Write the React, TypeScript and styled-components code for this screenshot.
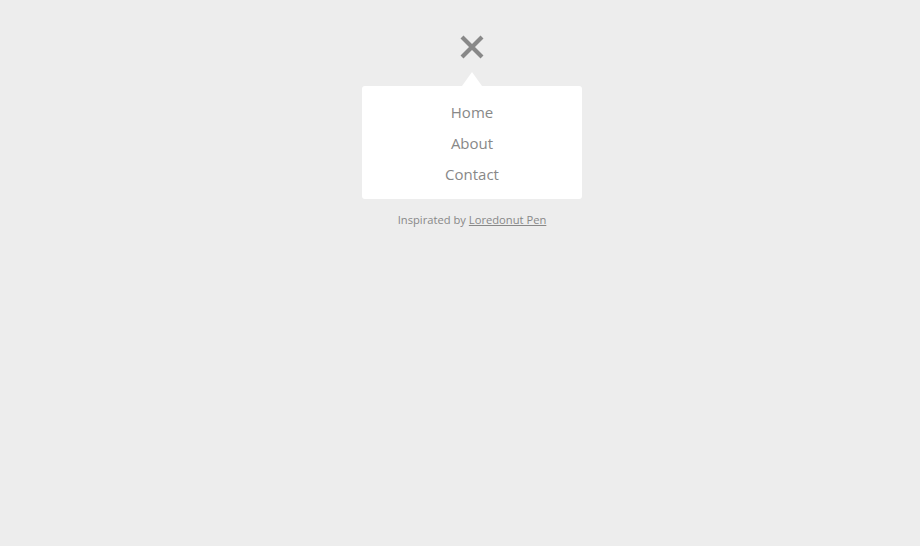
import React from 'react'
import styled, { createGlobalStyle } from 'styled-components'

const GlobalStyle = createGlobalStyle`
    html, body {
        margin: 0;
        padding: 0;
        background: #ededed;
        font-family: 'Open Sans', 'Segoe UI', sans-serif;
    }
`

const Page = styled.div`
    display: flex;
    flex-direction: column;
    align-items: center;
    padding: 34px 0 0 24px;
    min-height: 546px;
    box-sizing: border-box;
`

const Toggle = styled.button`
    width: 26px;
    height: 26px;
    padding: 0;
    border: 0;
    background: none;
    cursor: pointer;
    display: flex;
    align-items: center;
    justify-content: center;
`

const Menu = styled.nav`
    position: relative;
    margin-top: 26px;
    width: 220px;
    background: #fff;
    border-radius: 3px;
    padding: 11px 0 9px;
    display: flex;
    flex-direction: column;
    align-items: center;

    &::before {
        content: '';
        position: absolute;
        top: -14px;
        left: 50%;
        margin-left: -10px;
        border-left: 10px solid transparent;
        border-right: 10px solid transparent;
        border-bottom: 14px solid #fff;
    }
`

const MenuLink = styled.a`
    display: block;
    line-height: 31px;
    font-size: 15px;
    color: #888;
    text-decoration: none;
`

const Credit = styled.p`
    margin: 13px 0 0;
    font-size: 11.2px;
    line-height: 16px;
    color: #888;

    a {
        color: #888;
        text-decoration: underline;
    }
`

export default function App(): React.ReactElement {
    return (
        <Page>
            <GlobalStyle />
            <Toggle aria-label="Close menu">
                <svg width="26" height="26" viewBox="0 0 26 26">
                    <path d="M3 3 L23 23 M23 3 L3 23" stroke="#888" strokeWidth="4.2" strokeLinecap="butt" />
                </svg>
            </Toggle>
            <Menu>
                <MenuLink href="#">Home</MenuLink>
                <MenuLink href="#">About</MenuLink>
                <MenuLink href="#">Contact</MenuLink>
            </Menu>
            <Credit>
                Inspirated by <a href="#">Loredonut Pen</a>
            </Credit>
        </Page>
    )
}
